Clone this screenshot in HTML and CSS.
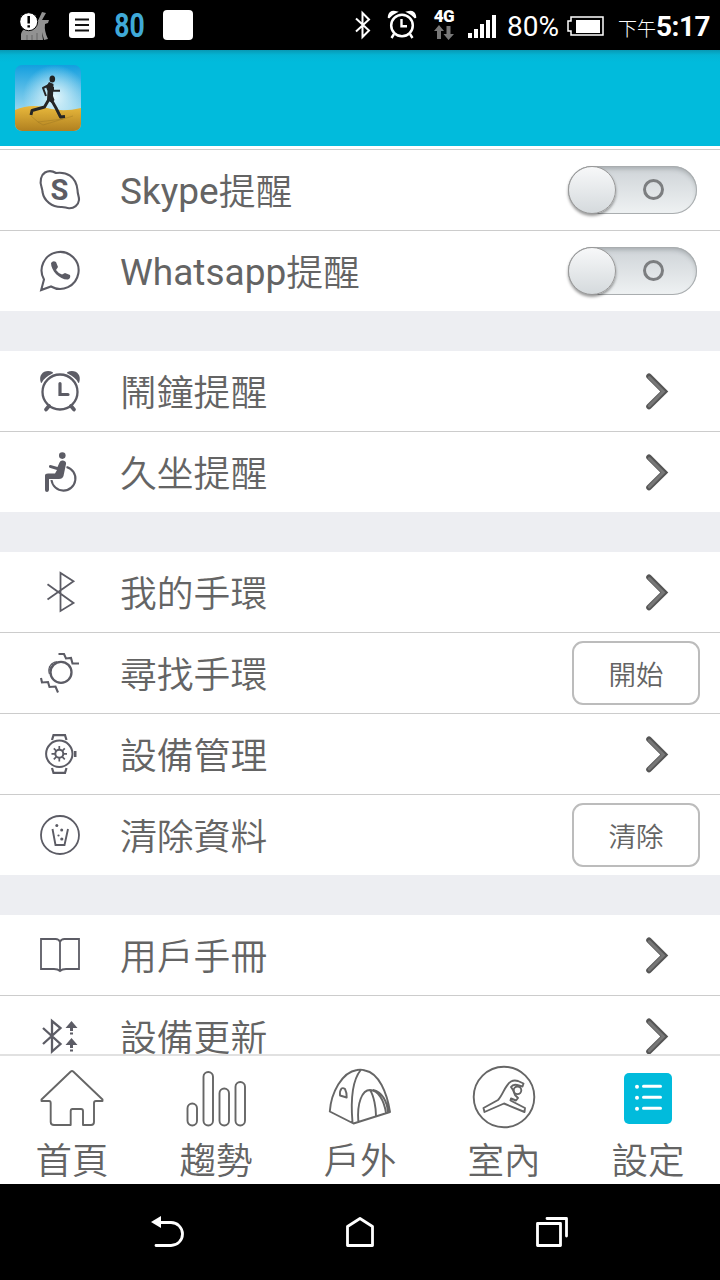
FILE: index.html
```html
<!DOCTYPE html>
<html lang="zh-Hant">
<head>
<meta charset="utf-8">
<title>設定</title>
<link rel="stylesheet" href="styles.css">
</head>
<body>
<svg class="defs" width="0" height="0">
  <defs>
    <linearGradient id="sky" x1="0" y1="0" x2="0" y2="1"><stop offset="0" stop-color="#139fdf"/><stop offset=".65" stop-color="#8fd3ee"/></linearGradient>
    <radialGradient id="glow" cx=".6" cy=".48" r=".48"><stop offset="0" stop-color="#e2f5fa"/><stop offset="1" stop-color="#e2f5fa" stop-opacity="0"/></radialGradient>
    <linearGradient id="sand" x1="0" y1="0" x2="0" y2="1"><stop offset="0" stop-color="#e9b93c"/><stop offset="1" stop-color="#b08020"/></linearGradient>
    <symbol id="chevron" viewBox="0 0 30 40"><path d="M6 5.200 21.300 20.500 6 35.500" fill="none" stroke="#555" stroke-width="5.600" stroke-linecap="round"/><path d="M6.300 6.500 20.300 20.500 6.300 34.800" fill="none" stroke="#777" stroke-width="3" stroke-linecap="round"/></symbol>
  </defs>
</svg>
<div class="screen">
  <header class="status">
    <div class="status-left">
      <svg width="30" height="32" viewBox="20 9 30 32"><path d="M21 40V34Q22 30 25 29L35 26Q38 21 42 12L46 13 42 20 49 20 48 23 45 24Q44 31 48 39L44 40 42 32 43 40Z" fill="#929292"/><path d="M27 35V40M32 35V40M37 33V40" stroke="#666" stroke-width="1"/><circle cx="28.700" cy="21.700" r="9" fill="#fff" stroke="#000"/><path d="M28.700 16V23.500M28.700 25.200V27.500" stroke="#000" stroke-width="2.500"/></svg>
      <svg width="26" height="26" viewBox="0 0 26 26"><rect width="26" height="26" rx="3" fill="#fff"/><path d="M6 7.500H20M6 13H20M6 18.500H20" stroke="#111" stroke-width="2"/></svg>
      <span class="count"><span>80</span></span>
      <span class="square"></span>
    </div>
    <div class="status-right">
      <svg class="s-bt" width="18" height="32" viewBox="0 0 18 32"><path d="M2 9.500 15 21.500 8.500 28V4L15 10.500 2 22.500" fill="none" stroke="#fff" stroke-width="2"/></svg>
      <svg class="s-alarm" width="30" height="30" viewBox="0 0 30 30"><g fill="none" stroke="#fff"><circle cx="15" cy="15.500" r="10.800" stroke-width="2.500"/><path d="M14.500 9V16.300H20M7 24 4.500 28M23 24 25.500 28" stroke-width="2.400"/></g><path d="M1.500 8Q1.500 0 9.500 2Q5 4 1.500 8M28.500 8Q28.500 0 20.500 2Q25 4 28.500 8" fill="#fff" stroke="#fff" stroke-width="1.500"/></svg>
      <span class="net"><b>4G</b><svg width="20" height="15" viewBox="0 0 20 15"><path d="M5 0 10 6H7V14H3V6H0ZM14.500 15 9.500 9H12.500V1H16.500V9H20Z" fill="#777"/></svg></span>
      <svg class="s-signal" width="28" height="23" viewBox="0 0 28 23"><path d="M0 18H4V23H0ZM6 14H10V23H6ZM12 9H16V23H12ZM18 5H22V23H18ZM24 0H28V23H24Z" fill="#fff"/></svg>
      <span class="percent">80%</span>
      <svg class="s-battery" width="37" height="20" viewBox="0 0 37 20"><path d="M4 1H36V19H4V15H1V5H4Z" fill="none" stroke="#fff" stroke-width="1.500"/><path d="M9 4H33V17H9Z" fill="#fff"/></svg>
      <span class="ampm">下午</span><span class="time">5:17</span>
    </div>
  </header>
  <div class="appbar">
    <svg class="app-icon" width="66" height="66" viewBox="0 0 66 66"><rect width="66" height="66" fill="url(#sky)"/><rect width="66" height="66" fill="url(#glow)"/><path d="M0 45Q14 39 28 42Q46 48 66 43V66H0Z" fill="url(#sand)"/><path d="M16 51 23 57 48 54 M23 57 28 60 58 51" fill="none" stroke="#8a6a20" stroke-width=".8" opacity=".4"/><ellipse cx="37.300" cy="14" rx="2.800" ry="3.600" fill="#222"/><path d="M34 17 38.500 19 38 31 39.500 35 37 38 32 35 32.500 26 31 22Z" fill="#252525"/><path d="M34 20 28 23 31 31M38 22 38 25.800 45 25.800" fill="none" stroke="#252525" stroke-width="2" stroke-linejoin="round"/><path d="M33.500 35 29.500 42 17 45.500 16 50M37 36 41 43 45.500 52 50 51.500" fill="none" stroke="#252525" stroke-width="2.900" stroke-linejoin="round"/></svg>
  </div>
  <main class="content">
    <section class="group first">
      <div class="row">
        <svg class="icon" viewBox="0 0 40 40"><path d="M1.500 17C-.5 11 1 5 5 2.500 9 .2 12.500 .8 16 3 26 1.500 36 6 37.500 20 37.600 25 39.200 26 39 30 38.500 35 34 38.500 29 38.200 26 38 24 36.600 21 37 12 37 4 31 2.500 22 2.500 20 2 19 1.500 17Z"/><text class="skype-s" x="19.500" y="30">S</text></svg>
        <span class="label">Skype<span class="cjk">提醒</span></span><span class="toggle"><i class="ring"></i><i class="knob"></i></span>
      </div>
      <div class="row">
        <svg class="icon" viewBox="0 0 40 40"><path d="M1.200 39 4 28.500A18.500 18.500 0 1 1 11 35.500Z"/><path class="fill" d="M11 12Q13 9 16 11L18 16 16 19Q18 22 22 23.500L25 22 30 24Q31 27 28 28.500C20 29 11 20 11 12Z"/></svg>
        <span class="label">Whatsapp<span class="cjk">提醒</span></span><span class="toggle"><i class="ring"></i><i class="knob"></i></span>
      </div>
    </section>
    <section class="group">
      <div class="row">
        <svg class="icon" viewBox="0 0 40 40"><circle cx="20" cy="21" r="17.500" stroke-width="2.300"/><path d="M20 12.500V23.500H28" stroke-width="3.200" stroke-linecap="round"/><path d="M9 35 6 38.500M31 35 34 38.500" stroke-width="3.700" stroke-linecap="round"/><path class="fill" d="M.8 11.500C-2 3 5-2 12.500 1Q14 2 12 2.800Q5 6 2.200 11Q1.500 12.500 .8 11.500ZM39.200 11.500C42 3 35-2 27.500 1Q26 2 28 2.800Q35 6 37.800 11Q38.500 12.500 39.200 11.500Z"/></svg>
        <span class="label"><span class="cjk">鬧鐘提醒</span></span><svg class="arrow"><use href="#chevron"/></svg>
      </div>
      <div class="row">
        <svg class="icon" viewBox="0 0 40 40"><circle class="fill" cx="22.300" cy="3.600" r="3.300"/><path class="fill" d="M19.500 10.500Q20.500 8 23 8.500 26.500 9 26 12L23.500 24Q22.500 27 19 27H9V38Q8.500 40 7 40 5 40 5 38V23.500Q5 21.500 8 21.500H15L17 18 9.500 15.800Q8 13.500 10.500 13L17.500 15Z"/><path d="M26.500 15A12 12 0 1 1 11.500 28" stroke-width="2.100"/></svg>
        <span class="label"><span class="cjk">久坐提醒</span></span><svg class="arrow"><use href="#chevron"/></svg>
      </div>
    </section>
    <section class="group">
      <div class="row">
        <svg class="icon" viewBox="0 0 40 40"><path d="M7.500 12.300 33.500 31 20.500 39V1L33.500 9.300 7.500 27.500" stroke-width="1.800"/></svg>
        <span class="label"><span class="cjk">我的手環</span></span><svg class="arrow"><use href="#chevron"/></svg>
      </div>
      <div class="row">
        <svg class="icon" viewBox="0 0 40 40"><circle cx="21" cy="19.300" r="10.500" stroke-width="2.300"/><path d="M17 8.800C11 9 7.500 15 9.500 21" stroke-width="1.300"/><path d="M9 13.500 12 15M11 11 13.500 12.500M9 16.500 11 17.500" stroke-width="1.200"/><path d="M18.500 1H24L26 5.500 31 5 32.500 10.500H39M1 25 2 29.500 8 29 9.500 34 15.500 33.500 18 39.500" stroke-width="2.100"/></svg>
        <span class="label"><span class="cjk">尋找手環</span></span><button class="action">開始</button>
      </div>
      <div class="row">
        <svg class="icon" viewBox="0 0 40 40"><circle cx="19.300" cy="19.800" r="13.200" stroke-width="2"/><path d="M12 6 13.500 1.200H25L26.500 6M12 34 13.500 38.800H25L26.500 34" stroke-width="2.200"/><path class="fill" d="M34 17H36.500V23H34Z"/><circle cx="19.300" cy="19.800" r="4" stroke-width="2"/><path d="M19.300 12V15.500M19.300 24V27.500M11.500 19.800H15M23.500 19.800H27M13.800 14.300 16.300 16.800M22.300 22.800 24.800 25.300M24.800 14.300 22.300 16.800M16.300 22.800 13.800 25.300" stroke-width="1.700"/></svg>
        <span class="label"><span class="cjk">設備管理</span></span><svg class="arrow"><use href="#chevron"/></svg>
      </div>
      <div class="row">
        <svg class="icon" viewBox="0 0 40 40"><circle cx="20" cy="20" r="19" stroke-width="1.800"/><path d="M12.500 14 15.500 30H24.500L28 14" stroke-width="1.900"/><g class="fill"><circle cx="16.800" cy="10.500" r="1.500"/><circle cx="21.700" cy="15" r="1.500"/><circle cx="18.500" cy="20.500" r="1.100"/><circle cx="21.800" cy="24" r="1.600"/></g></svg>
        <span class="label"><span class="cjk">清除資料</span></span><button class="action">清除</button>
      </div>
    </section>
    <section class="group">
      <div class="row">
        <svg class="icon" viewBox="0 0 40 40"><path d="M20 36V7Q19 4 15.500 4H1V34H14Q18 34 20 36 22 34 26 34H39V4H24.500Q21 4 20 7" stroke-width="1.800"/></svg>
        <span class="label"><span class="cjk">用戶手冊</span></span><svg class="arrow"><use href="#chevron"/></svg>
      </div>
      <div class="row">
        <svg class="icon" viewBox="0 0 40 40"><path d="M3 12 20.500 28 12 35.500V5L20.500 12 3 28" stroke-width="2.300"/><path class="fill" d="M31.500 5 37.500 12H25.500ZM31.500 22 37.500 29H25.500ZM30 12H33V15H30ZM30 16.500H33V18.500H30ZM30 29H33V32H30ZM30 33.500H33V35.500H30Z"/></svg>
        <span class="label"><span class="cjk">設備更新</span></span><svg class="arrow"><use href="#chevron"/></svg>
      </div>
    </section>
  </main>
  <nav class="tabs">
    <a class="tab"><svg viewBox="0 0 64 64"><path d="M30.800 6.500Q32 5.500 33.200 6.500L62.500 34.500V36H56Q54 36 54 38V57Q54 60 51 60H43V46Q43 44 41 44H32.500Q30.700 44 30.700 46V60H14Q10.700 60 10.700 57V38Q10.700 36 9 36H1.500V34.500Z"/></svg><span>首頁</span></a>
    <a class="tab"><svg viewBox="0 0 64 64"><rect x="3.500" y="38.500" width="9.500" height="22" rx="4.750"/><rect x="19.500" y="7" width="9.500" height="53.500" rx="4.750"/><rect x="35.500" y="23.500" width="9.500" height="37" rx="4.750"/><rect x="51.500" y="17" width="9.500" height="43.500" rx="4.750"/></svg><span>趨勢</span></a>
    <a class="tab"><svg viewBox="0 0 64 64"><path d="M1.800 46.500C3 28 14 7 29 5Q33 4 37 5.500C51 8 59 28 62 47L25.500 58.500ZM32.700 5C23 17 23 40 24.500 57.500M30.300 56C29 38 34 25 42 25 50 25 56 35 58 48M42 25C46 31 48 43 48 51M45 25C54 27 59 36 60 47M13.500 23.500Q15 22.500 17 24Q19 28 18.700 32.500L12 30.500Q11.500 26 13.500 23.500Z"/></svg><span>戶外</span></a>
    <a class="tab"><svg viewBox="0 0 64 64"><circle cx="32" cy="32" r="30.300"/><path d="M11.500 43 26 35C31 30 33 20 39 16.500Q42 14.800 46 16L51.500 18.500 50.500 21.500 45 20Q41 19 39 22L41 25 43 30 46 33 44 35.500 39 33.500 38.500 35.500 53 43 52.500 47 32 38.500 12.500 47Z"/><circle cx="45.500" cy="25.300" r="3.800"/></svg><span>室內</span></a>
    <a class="tab active"><svg viewBox="0 0 64 64"><rect class="tile" x="8" y="8" width="48" height="51" rx="5"/><path class="lines" d="M27.500 21.300H44.500M27.500 32.300H44.500M27.500 43.300H44.500"/><g class="dots"><circle cx="21" cy="21.700" r="2"/><circle cx="21" cy="32.700" r="2"/><circle cx="21" cy="43.700" r="2"/></g></svg><span>設定</span></a>
  </nav>
  <footer class="softkeys">
    <svg width="34" height="34" viewBox="0 0 34 34"><path d="M0 7 10 1V13Z" fill="#fff"/><path d="M8 7.500H20A11.300 11.300 0 0 1 20 30.500H5" fill="none" stroke="#fff" stroke-width="2.800" stroke-linecap="round"/></svg>
    <svg width="30" height="34" viewBox="0 0 30 34"><path d="M2.500 11.500 15 3.500 27.500 11.500V30.500H2.500Z" fill="none" stroke="#fff" stroke-width="2.800" stroke-linejoin="round"/></svg>
    <svg width="34" height="34" viewBox="0 0 34 34"><path d="M2.500 8.500H25.500V30.500H2.500ZM12 3.500H31.500V21" fill="none" stroke="#fff" stroke-width="2.800" stroke-linecap="round" stroke-linejoin="round"/></svg>
  </footer>
</div>
</body>
</html>
```

FILE: styles.css
```css
* { box-sizing: border-box; }
body { margin: 0; background: #000; }
.defs { display: block; }
.screen {
  display: flex; flex-direction: column;
  width: 720px; height: 1280px; overflow: hidden;
  font-family: Roboto, "Noto Sans CJK TC", sans-serif;
  color: #646464;
}
.status {
  display: flex; justify-content: space-between; align-items: center;
  height: 50px; flex: none; padding: 0 11px 0 20px;
  background: #000; color: #fff;
}
.status svg { display: block; flex: none; }
.status-left, .status-right { display: flex; align-items: center; }
.status-left { gap: 19px; }
.count {
  display: flex; justify-content: center; width: 30px;
  color: #3fa9d8; font-size: 34px; line-height: 50px; font-weight: 700;
}
.count span { transform: scaleX(.78); }
.square { width: 30px; height: 30px; border-radius: 4px; background: #fff; }
.s-bt { margin-right: 1px; }
.s-alarm { margin-left: 14px; }
.net { display: flex; flex-direction: column; align-items: center; width: 22px; margin: 0 13px 0 16px; }
.net b { height: 15px; font: 900 17px/13px Roboto, sans-serif; letter-spacing: -.5px; }
.s-signal { margin-top: 3px; }
.percent { width: 51px; margin-left: 11px; font-size: 28px; line-height: 50px; padding-top: 3px; white-space: nowrap; }
.s-battery { margin-left: 9px; margin-top: 1px; }
.ampm { width: 38px; margin-left: 14px; padding-top: 4px; font-size: 19px; font-weight: 300; white-space: nowrap; }
.time { width: 53px; padding-top: 3px; font-size: 28px; font-weight: 700; letter-spacing: -.5px; white-space: nowrap; }
.appbar {
  display: flex; align-items: center;
  height: 96px; flex: none; padding-left: 15px;
  background: linear-gradient(#0899b4 0, #04b4d4 5px, #01bbdc 12px);
}
.app-icon { display: block; border-radius: 7px; }
.content {
  display: flex; flex-direction: column; gap: 40px;
  flex: 1; min-height: 0; overflow: hidden;
  padding-top: 3px; border-bottom: 2px solid #e1e1e1;
  background: linear-gradient(#fff 3px, #edeef2 3px);
}
.group { flex: none; background: #fff; }
.group.first { border-top: 1px solid #ccc; }
.row { display: flex; align-items: center; height: 80px; padding: 0 20px 0 40px; }
.row + .row { height: 81px; border-top: 1px solid #ccc; }
.icon { width: 40px; height: 40px; flex: none; fill: none; stroke: #5c5c65; stroke-width: 2.1; overflow: visible; }
.icon .fill { fill: #5c5c65; stroke: none; }
.skype-s { font: 700 29px Roboto, sans-serif; fill: #5c5c65; stroke: none; text-anchor: middle; }
.label { flex: 1; margin-left: 40px; padding-top: 4px; font-size: 37px; line-height: 74px; white-space: nowrap; }
.cjk, .tab span, .action { font-family: "Noto Sans CJK TC DemiLight", "Noto Sans CJK TC", sans-serif; font-weight: 350; }
.cjk { display: inline-block; line-height: 40px; font-size: 36.8px; vertical-align: -1px; }
.arrow { width: 30px; height: 40px; margin-right: 27px; }
.action {
  width: 128px; height: 64px; padding: 0 0 1px;
  border: 2px solid #bcbcbc; border-radius: 11px; background: #fff;
  color: #646464; font-size: 27.5px;
}
.toggle {
  display: flex; align-items: center; justify-content: space-between; flex-direction: row-reverse;
  width: 129px; height: 48px; margin-right: 3px; border-radius: 24px;
  background: linear-gradient(#ced3d7, #eff2f3);
  box-shadow: inset 0 0 0 1px #a9adaf, inset 0 3px 4px rgba(80, 85, 90, .3);
}
.knob {
  width: 48px; height: 48px; border: 1px solid #999; border-radius: 50%;
  background: linear-gradient(#f7f8f9, #d5dadd); box-shadow: 0 2px 3px rgba(0, 0, 0, .4);
}
.ring { width: 21px; height: 21px; margin: 0 33px 1px 0; border: 3px solid #7c7e80; border-radius: 50%; }
.tabs { display: flex; height: 128px; flex: none; background: #fff; }
.tab { display: flex; flex-direction: column; align-items: center; flex: 1; padding-top: 9px; font-size: 36.5px; }
.tab svg { width: 64px; height: 64px; flex: none; fill: none; stroke: #666; stroke-width: 1.9; stroke-linejoin: round; }
.tab span { line-height: 60px; }
.tab .tile { fill: #01bbdc; stroke: none; }
.tab .lines { stroke: #fff; stroke-width: 3; stroke-linecap: round; }
.tab .dots { fill: #fff; stroke: none; }
.softkeys {
  display: flex; justify-content: space-between; align-items: center;
  height: 96px; flex: none; padding: 0 151px; background: #000;
}
```
